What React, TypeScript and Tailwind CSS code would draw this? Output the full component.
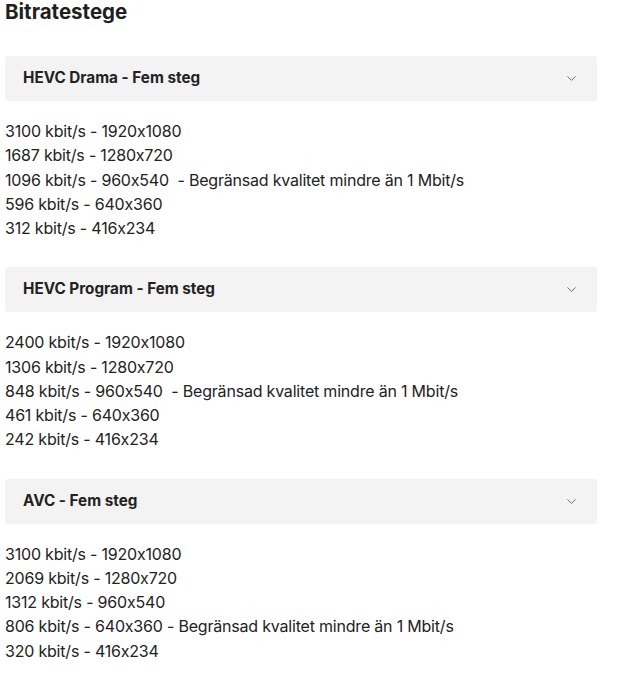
import { ChevronDown } from 'lucide-react';

const LADDERS = [
  {
    title: 'HEVC Drama - Fem steg',
    steps: [
      '3100 kbit/s - 1920x1080',
      '1687 kbit/s - 1280x720',
      '1096 kbit/s - 960x540\u00a0 - Begränsad kvalitet mindre än 1 Mbit/s',
      '596 kbit/s - 640x360',
      '312 kbit/s - 416x234',
    ],
  },
  {
    title: 'HEVC Program - Fem steg',
    steps: [
      '2400 kbit/s - 1920x1080',
      '1306 kbit/s - 1280x720',
      '848 kbit/s - 960x540\u00a0 - Begränsad kvalitet mindre än 1 Mbit/s',
      '461 kbit/s - 640x360',
      '242 kbit/s - 416x234',
    ],
  },
  {
    title: 'AVC - Fem steg',
    steps: [
      '3100 kbit/s - 1920x1080',
      '2069 kbit/s - 1280x720',
      '1312 kbit/s - 960x540',
      '806 kbit/s - 640x360 - Begränsad kvalitet mindre än 1 Mbit/s',
      '320 kbit/s - 416x234',
    ],
  },
];

export default function App() {
  return (
    <div className="w-[632px] h-[700px] bg-white px-[5px] text-[#222] font-['Inter',sans-serif] [font-feature-settings:'calt'_0]">
      <h2 className="text-[20.5px] leading-[28px] font-bold text-[#1f1f1f] -mt-[2px]">Bitratestege</h2>
      <div className="mt-[30px] w-[592px]">
        {LADDERS.map((l) => (
          <section key={l.title} className="mb-[27px]">
            <div className="h-[45px] bg-[#f3f3f3] rounded-[3px] flex items-center justify-between pl-[18px] pr-[18px]">
              <span className="text-[15.25px] font-bold text-[#222]">{l.title}</span>
              <ChevronDown size={15} strokeWidth={1.5} className="text-[#666]" />
            </div>
            <ul className="mt-[18px] text-[16px] leading-[24.25px] tracking-[-0.2px]">
              {l.steps.map((s) => (
                <li key={s} className="whitespace-pre">{s}</li>
              ))}
            </ul>
          </section>
        ))}
      </div>
    </div>
  );
}
